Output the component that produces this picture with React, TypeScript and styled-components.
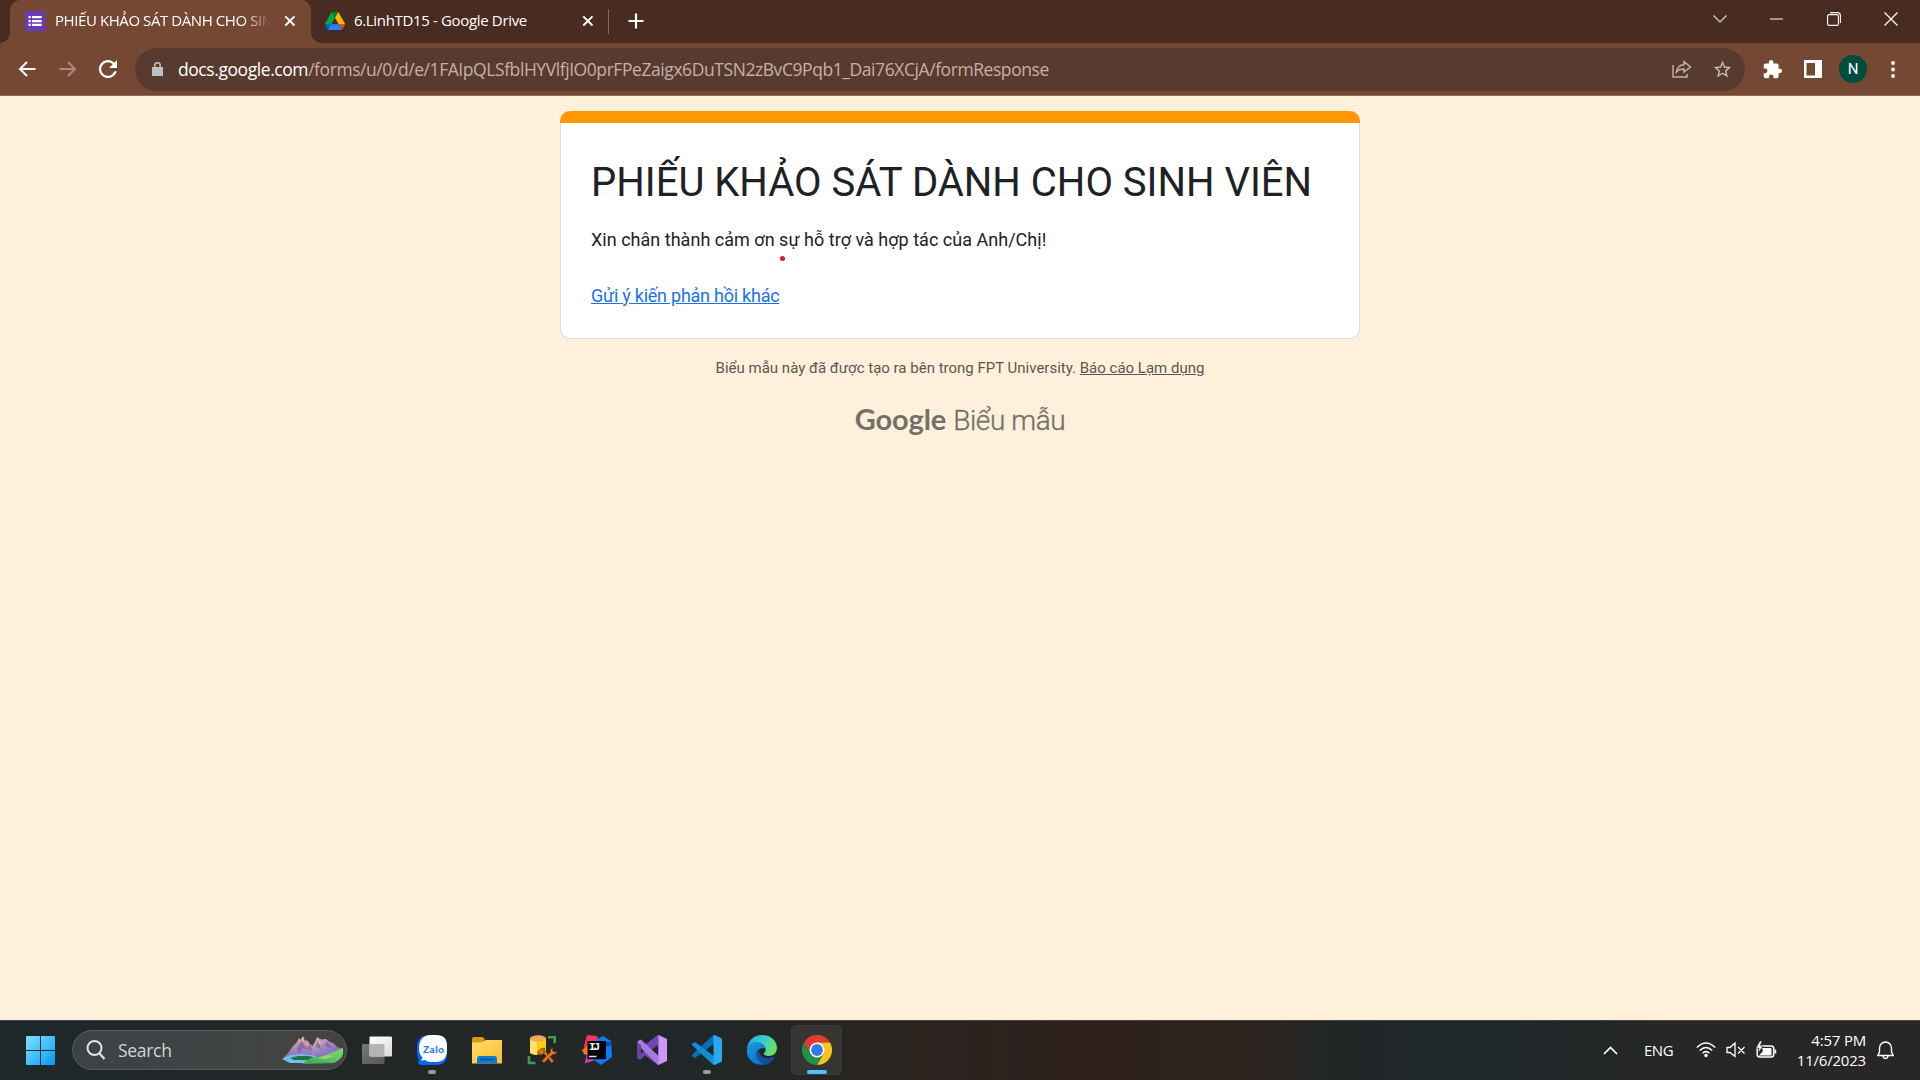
import React from "react";
import styled, { createGlobalStyle } from "styled-components";

const ui = `"Open Sans", "Noto Sans", sans-serif`;

const GlobalStyle = createGlobalStyle`
  * { box-sizing: border-box; }
  body { margin: 0; overflow: hidden; background: #fff0db; }
`;

const Screen = styled.div`
  width: 1920px;
  height: 1080px;
  display: flex;
  flex-direction: column;
  overflow: hidden;
  background: #fff0db;
  font-family: ${ui};
`;

/* ---------- Browser frame ---------- */

const TabStrip = styled.header`
  height: 43px;
  flex: none;
  display: flex;
  align-items: stretch;
  padding-left: 10px;
  background: #492c21;
  color: #fff;
`;

const Tab = styled.div<{ $active?: boolean; $width: number }>`
  position: relative;
  width: ${(p) => p.$width}px;
  height: 43px;
  display: flex;
  align-items: center;
  padding: ${(p) => (p.$active ? "0 15px 2px 15px" : "0 14px 2px 14px")};
  border-radius: 10px 10px 0 0;
  background: ${(p) => (p.$active ? "#744832" : "transparent")};

  &::before,
  &::after {
    content: "";
    display: ${(p) => (p.$active ? "block" : "none")};
    position: absolute;
    bottom: 0;
    width: 10px;
    height: 10px;
  }
  &::before {
    left: -10px;
    background: radial-gradient(circle at 0 0, transparent 9.5px, #744832 10px);
  }
  &::after {
    right: -10px;
    background: radial-gradient(circle at 100% 0, transparent 9.5px, #744832 10px);
  }
`;

const TabTitle = styled.span<{ $fade?: boolean; $tracking: number }>`
  flex: 1;
  margin: -2px 13px 0 ${(p) => (p.$fade ? 10 : 9)}px;
  overflow: hidden;
  white-space: nowrap;
  font-size: 15px;
  line-height: 24px;
  letter-spacing: ${(p) => p.$tracking}px;
  mask-image: ${(p) => (p.$fade ? "linear-gradient(90deg, #000 calc(100% - 28px), transparent)" : "none")};
`;

const TabDivider = styled.i`
  width: 1px;
  height: 25px;
  margin-top: 9px;
  background: #86695c;
`;

const NewTab = styled.div`
  width: 54px;
  display: flex;
  align-items: center;
  justify-content: center;
  padding-bottom: 1px;
`;

const WindowControls = styled.div`
  margin-left: auto;
  margin-right: 1px;
  display: flex;
  height: 37px;
`;

const WindowButton = styled.div`
  width: 57px;
  display: flex;
  align-items: center;
  justify-content: center;
`;

const Toolbar = styled.nav`
  height: 53px;
  flex: none;
  display: flex;
  align-items: center;
  padding: 0 7px 0 7px;
  background: #744832;
  border-bottom: 1px solid #8f6a55;
`;

const ToolButton = styled.div<{ $width?: number }>`
  width: ${(p) => p.$width ?? 40}px;
  height: 40px;
  flex: none;
  display: flex;
  align-items: center;
  justify-content: center;
`;

const Omnibox = styled.div`
  width: 1610px;
  height: 43px;
  flex: none;
  margin-left: 7px;
  display: flex;
  align-items: center;
  padding: 0 3px 0 17px;
  border-radius: 22px;
  background: #593a2f;
`;

const Address = styled.div`
  flex: 1;
  margin-left: 15px;
  white-space: nowrap;
  font-size: 17.5px;
  line-height: 28px;
  letter-spacing: -0.43px;
  color: #c3b1a8;
`;

const Host = styled.span`
  color: #fff;
`;

const Avatar = styled.div`
  width: 28px;
  height: 28px;
  border-radius: 50%;
  background: #004d40;
  color: #fff;
  font: 15px/28px Roboto, sans-serif;
  text-align: center;
`;

/* ---------- Form page ---------- */

const Page = styled.main`
  flex: 1;
  display: flex;
  flex-direction: column;
  align-items: center;
  padding-top: 15px;
  font-family: Roboto, sans-serif;
`;

const Card = styled.section`
  position: relative;
  width: 800px;
  height: 228px;
  display: flex;
  flex-direction: column;
  color: #202124;
`;

const Accent = styled.div`
  height: 12px;
  border-radius: 10px 10px 0 0;
  background: #ff9800;
`;

const CardBody = styled.div`
  flex: 1;
  display: flex;
  flex-direction: column;
  align-items: flex-start;
  padding: 35px 30px 0;
  border: 1px solid #dadce0;
  border-top: 0;
  border-radius: 0 0 10px 10px;
  background: #fff;
`;

const Title = styled.h1`
  margin: 0;
  font-size: 40px;
  line-height: 50px;
  font-weight: 400;
  white-space: nowrap;
`;

const Message = styled.p`
  margin: 19px 0 0;
  font-size: 18px;
  line-height: 26px;
  letter-spacing: 0.02px;
  white-space: nowrap;
`;

const FormLink = styled.a`
  margin-top: 30px;
  font-size: 18px;
  line-height: 26px;
  letter-spacing: -0.24px;
  color: #1a73e8;
  text-decoration: underline;
  white-space: nowrap;
`;

const Pointer = styled.i`
  position: absolute;
  left: 220px;
  top: 145px;
  width: 5px;
  height: 5px;
  border-radius: 50%;
  background: #e81224;
`;

const Notice = styled.p`
  margin: 18px 0 0;
  font-size: 15px;
  line-height: 22px;
  color: #5c574f;
  white-space: nowrap;
`;

const Report = styled.a`
  text-decoration: underline;
`;

const Brand = styled.div`
  display: flex;
  align-items: baseline;
  margin-top: 20px;
  gap: 7px;
  font-size: 28px;
  line-height: 40px;
  color: #757067;
  white-space: nowrap;
`;

const BrandName = styled.span`
  font-family: Lato, sans-serif;
  font-weight: 700;
  font-size: 29px;
  letter-spacing: -0.1px;
`;

const BrandProduct = styled.span`
  font-weight: 300;
  letter-spacing: -0.4px;
  -webkit-text-stroke: 0.35px #757067;
`;

/* ---------- Taskbar ---------- */

const Taskbar = styled.footer`
  height: 60px;
  flex: none;
  display: flex;
  align-items: center;
  padding: 0 26px 1px;
  border-top: 1px solid #454644;
  background: linear-gradient(90deg, #1e282b 0, #232627 300px, #212728 700px, #28251f 860px, #2e201d 1080px, #2d231d 1230px, #272523 1290px, #202626 1340px, #20282a 1500px, #262727 1650px, #282726 1920px);
  color: #fff;
`;

const SearchBox = styled.div`
  width: 275px;
  height: 40px;
  margin-left: 17px;
  margin-right: 2px;
  display: flex;
  align-items: center;
  padding: 0 2px 0 13px;
  border: 1px solid #5a5c5c;
  border-radius: 20px;
  background: linear-gradient(90deg, #3b4346, #444342);
`;

const SearchText = styled.span`
  flex: 1;
  margin-left: 12px;
  font-size: 17.5px;
  letter-spacing: -0.3px;
  color: #d4d6d6;
`;

const AppSlot = styled.div<{ $active?: boolean }>`
  position: relative;
  width: 51px;
  height: 50px;
  margin: 0 2px;
  flex: none;
  display: flex;
  align-items: center;
  justify-content: center;
  border-radius: 5px;
  border: 1px solid ${(p) => (p.$active ? "#3d3b3a" : "transparent")};
  background: ${(p) => (p.$active ? "#363534" : "transparent")};
`;

const Indicator = styled.i<{ $active?: boolean }>`
  position: absolute;
  bottom: 0;
  width: ${(p) => (p.$active ? 20 : 8)}px;
  height: 4px;
  border-radius: 2px;
  background: ${(p) => (p.$active ? "#4cc2ff" : "#9a9b9b")};
`;

const Tray = styled.div`
  margin-left: auto;
  display: flex;
  align-items: center;
`;

const Language = styled.span`
  margin: 0 22px 0 26px;
  width: 30px;
  font-size: 15px;
  letter-spacing: -0.5px;
`;

const StatusIcons = styled.div`
  display: flex;
  align-items: center;
  gap: 10px;
`;

const Clock = styled.div`
  width: 89px;
  margin: -1px 11px 0 0;
  text-align: right;
  font-size: 15px;
  line-height: 20px;
  letter-spacing: -0.2px;
  white-space: nowrap;
`;

/* ---------- Drawings ---------- */

const CloseGlyph = () => (
  <svg width="12" height="12" viewBox="0 0 12 12" stroke="#fff" strokeWidth="1.9">
    <path d="M1.3 1.3l9.2 9.2M10.5 1.3l-9.2 9.2" />
  </svg>
);

const FormsIcon = () => (
  <svg width="20" height="20" viewBox="0 0 20 20">
    <rect width="20" height="20" rx="1.5" fill="#673ab7" />
    <g fill="#fff">
      <path d="M3.500 5h2.300v2.300H3.500zM3.500 8.900h2.300v2.300H3.500zM3.500 12.800h2.300v2.300H3.500zM7 5h9.700v2.300H7zM7 8.900h9.700v2.300H7zM7 12.800h9.700v2.300H7z" />
    </g>
  </svg>
);

const DriveIcon = () => (
  <svg width="20" height="18" viewBox="0 0 87.3 78">
    <path d="m6.6 66.85 3.85 6.65c.8 1.4 1.95 2.5 3.3 3.3l13.75-23.8h-27.5c0 1.55.4 3.1 1.2 4.5z" fill="#0066da" />
    <path d="m43.65 25-13.75-23.8c-1.35.8-2.5 1.9-3.3 3.3l-25.4 44a9.06 9.06 0 0 0 -1.2 4.5h27.5z" fill="#00ac47" />
    <path d="m73.55 76.8c1.35-.8 2.5-1.9 3.3-3.3l1.6-2.75 7.65-13.25c.8-1.4 1.2-2.95 1.2-4.5h-27.5l5.85 11.5z" fill="#ea4335" />
    <path d="m43.65 25 13.75-23.8c-1.35-.8-2.9-1.2-4.5-1.2h-18.5c-1.6 0-3.15.45-4.5 1.2z" fill="#00832d" />
    <path d="m59.8 53h-32.3l-13.75 23.8c1.35.8 2.9 1.2 4.5 1.2h50.8c1.6 0 3.15-.45 4.5-1.2z" fill="#2684fc" />
    <path d="m73.4 26.5-12.7-22c-.8-1.4-1.95-2.5-3.3-3.3l-13.75 23.8 16.15 28h27.45c0-1.55-.4-3.1-1.2-4.5z" fill="#ffba00" />
  </svg>
);

const WindowsIcon = () => (
  <svg width="29" height="29" viewBox="0 0 29 29">
    <defs>
      <linearGradient id="win" x1="0" y1="0" x2="29" y2="29" gradientUnits="userSpaceOnUse">
        <stop stopColor="#84dfff" />
        <stop offset=".5" stopColor="#3fc0fb" />
        <stop offset="1" stopColor="#0a95fa" />
      </linearGradient>
    </defs>
    <path fill="url(#win)" d="M1 0h13v14H0V1a1 1 0 0 1 1-1zM15 0h13a1 1 0 0 1 1 1v13H15zM0 15h14v14H1a1 1 0 0 1-1-1zM15 15h14v13a1 1 0 0 1-1 1H15z" />
  </svg>
);

const MountainArt = () => (
  <svg width="62" height="28" viewBox="0 0 62 28">
    <defs>
      <linearGradient id="mtA" x1="0" y1="0" x2="0" y2="1">
        <stop stopColor="#f5a98e" />
        <stop offset=".4" stopColor="#b08abb" />
        <stop offset="1" stopColor="#6560a4" />
      </linearGradient>
      <linearGradient id="mtB" x1="0" y1="0" x2="1" y2="1">
        <stop stopColor="#e8b0b4" />
        <stop offset=".5" stopColor="#9a80c2" />
        <stop offset="1" stopColor="#6663ad" />
      </linearGradient>
      <linearGradient id="grass" x1="0" y1="1" x2="1" y2="0">
        <stop stopColor="#30a64b" />
        <stop offset="1" stopColor="#85db72" />
      </linearGradient>
    </defs>
    <path d="M1 22L6 17l5-7 4-4 2-4 2 2 2-4 2 5 2-1 3 4 3 2 2-4 2-5 3 2 3 1 3-1 3 3 4 1 4 4 5 3v7l-10 4-28 3z" fill="url(#mtA)" />
    <path d="M31 9l5-7 3 2 4-1 5 3 3 3 4 2 6 2v4l-7 3-14-2-10 2z" fill="url(#mtB)" />
    <path d="M18 7l3-4 1 6 4 5-5-2-4 5-2-4zM36 4l3 9-5-2zM45 6l5 7-7-4zM28 9l2 6-5-3z" fill="#5b5499" opacity=".55" />
    <path d="M19 3l2-2 1 6-2-2zM36 4l4 4-3 0zM24 6l3 3-2 0z" fill="#ffc3a0" opacity=".7" />
    <path d="M0 23l8-4 13-1 14 2-8 7H8z" fill="#6fbdf5" />
    <path d="M8 22l8-2h10l6 1-6 3-14 0z" fill="#23733f" />
    <path d="M20 28l9-6 10-1 12-5 10-4v6q-2 6-9 9z" fill="url(#grass)" />
    <path d="M34 22l11-3 8 1-9 3z" fill="#c5e886" opacity=".55" />
  </svg>
);

const TaskViewIcon = () => (
  <svg width="30" height="30" viewBox="0 0 30 30">
    <defs>
      <linearGradient id="tvA" x1="0" y1="0" x2="1" y2="1"><stop stopColor="#fff" /><stop offset="1" stopColor="#dcdcdc" /></linearGradient>
      <linearGradient id="tvB" x1="0" y1="0" x2="1" y2="1"><stop stopColor="#777" /><stop offset="1" stopColor="#555" /></linearGradient>
    </defs>
    <rect x="0" y="9" width="22.500" height="20" rx="1" fill="url(#tvB)" />
    <rect x="7.500" y="1.500" width="22.500" height="20" rx="1" fill="url(#tvA)" />
    <path d="M7.500 9h15v12.500h-14a1 1 0 0 1-1-1z" fill="#b5b5b5" />
  </svg>
);

const ZaloIcon = () => (
  <svg width="30" height="30" viewBox="0 0 30 30">
    <path d="M12 0h7q11 0 11 11v8q0 11-11 11H4l-3-1.500 1-4q-2-2-2-7v-5Q0 0 12 0z" fill="#0068ff" />
    <path d="M14 0h5q11 0 11 11v4q0 12-11 12h-5q-4 0-6-2l-4 .8 1.500-3.300Q2 19 2 14 2 0 14 0z" fill="#fff" />
    <text x="6" y="17.500" fontFamily="Lato, sans-serif" fontWeight="900" fontSize="10" textLength="21" fill="#2a7bf0">Zalo</text>
  </svg>
);

const FolderIcon = () => (
  <svg width="30" height="30" viewBox="0 0 30 30">
    <defs><linearGradient id="fold" x1="0" y1="0" x2="1" y2="1"><stop stopColor="#ffdc74" /><stop offset="1" stopColor="#fcbd2a" /></linearGradient></defs>
    <path d="M0 4q0-2 2-2h8l3 2-3 5H0z" fill="#dd9a0a" />
    <path d="M0 7.500h9.500l4-2.500H30v23.500H0z" fill="url(#fold)" />
    <path d="M5 28.500v-5q0-2.500 2.500-2.500h15q2.500 0 2.500 2.500v5z" fill="#0f7bd2" />
    <path d="M8.500 24.500h13" stroke="#0a4f95" strokeWidth="1.3" />
  </svg>
);

const DatabaseIcon = () => (
  <svg width="30" height="30" viewBox="0 0 30 30">
    <path d="M3 3.500v14.500q6 3.500 16 0V3.500z" fill="#ffd000" />
    <path d="M3 3.500v14.500q3 2 7 2V6z" fill="#ffe268" />
    <ellipse cx="11" cy="3.500" rx="8" ry="3.200" fill="#eda95a" />
    <path d="M21 2.200h6.700v6M2 21v7h6.500" fill="none" stroke="#3f9e4b" strokeWidth="2.600" />
    <g stroke="#3b2b1b" strokeWidth=".6" fill="#ef7410">
      <path d="M14.500 15.500l2-1.500 10.500 12-2.500 2z" />
      <path d="M14.500 26l9-9-.5-2.500 3-2-.5 3 2 1.500 2.500-1.500-1 3.500-3.500.8-8.500 8z" />
      <path d="M10.500 18q1-4.500 7.500-5l-1.500 2.500 1 2-3 2.500-1.500-1.500-1.500 1z" />
    </g>
  </svg>
);

const IntelliJIcon = () => (
  <svg width="30" height="30" viewBox="0 0 30 30">
    <path d="M5 0l10 1 3 6-4 14-10-2-2-8z" fill="#fe315d" />
    <path d="M0 15l4-3 5 1-2 8-5-2z" fill="#f97a12" />
    <path d="M2.500 28.500L5 18l12 4-6 4z" fill="#c73aa7" />
    <path d="M12 6l9-5 8 5 1 16-11 8-8-6z" fill="#087cfa" />
    <path d="M24 7l5 0-1 4-4 0z" fill="#1c3fa8" />
    <path d="M5.500 6H24v18.200H5.500z" fill="#000" />
    <text x="7" y="14.800" fontFamily="Liberation Mono, monospace" fontWeight="700" fontSize="11" textLength="11" fill="#fff">IJ</text>
    <path d="M7 21.500h7.500" stroke="#ddd" strokeWidth="1.500" />
  </svg>
);

const VisualStudioIcon = () => (
  <svg width="30" height="30" viewBox="0 0 30 30">
    <path d="M0 7l3-2 5 4.500L21 0l1 0v30h-1L8 20.500 3 25l-3-2z" fill="#7047ac" />
    <path d="M4 11v8l4-4zM21 10v10l-7-5z" fill="#242626" />
    <path d="M1 6l3-1.500 18 17V30h-1L0 9z" fill="#a97be0" />
    <path d="M0 7l4 3v10l-4 3z" fill="#6a42a3" />
    <path d="M21.500 0L30 4v22l-8.500 4z" fill="#cd95fa" />
  </svg>
);

const VsCodeIcon = () => (
  <svg width="30" height="30" viewBox="0 0 30 30">
    <path d="M.5 19.500L20.500.8 22.500 0v8.500L3.500 22.500q-1 .6-2 0L.4 21.400q-.8-1 .1-1.900z" fill="#0073b7" />
    <path d="M.5 10.500l20 18.700 2 .8v-8.500L3.500 7.500q-1-.6-2 0L.4 8.600q-.8 1 .1 1.900z" fill="#0f8fd8" />
    <path d="M21.500 29.600V.4q.6-.6 1.500-.2L29 3q1 .5 1 1.600v20.800q0 1.100-1 1.600l-6 2.800q-.9.400-1.500-.2z" fill="#29a9f2" />
  </svg>
);

const EdgeIcon = () => (
  <svg width="30" height="30" viewBox="0 0 30 30">
    <defs>
      <linearGradient id="edgeTop" x1="0" y1="0" x2="30" y2="16" gradientUnits="userSpaceOnUse">
        <stop stopColor="#2aa5dc" /><stop offset=".5" stopColor="#38cdd0" /><stop offset="1" stopColor="#6fe552" />
      </linearGradient>
      <linearGradient id="edgeLow" x1="0" y1="8" x2="18" y2="30" gradientUnits="userSpaceOnUse">
        <stop stopColor="#1b9ae0" /><stop offset="1" stopColor="#0a68c4" />
      </linearGradient>
    </defs>
    <path d="M0 14C1 5 7 0 15 0c9 0 15 6 15 13 0 5-4 8-8 8-4 0-6-1.500-5-3 2-2 2-4 1-6C13 4 3 8 0 14z" fill="url(#edgeTop)" />
    <path d="M0 15C1 9 6 6 11 7.500c4 0 7 3 7.500 6-5-2-9 2-8.500 7 .5 4 4 8 9 8.500C10 32-1 26 0 15z" fill="url(#edgeLow)" />
    <path d="M11.500 13C6 20 12 28 18 29.500c4-.5 8-3.500 9.500-7 .3-.8-.3-1-.9-.7-8 3.700-16-1.300-15.100-8.800z" fill="#114f9e" />
  </svg>
);

const ChromeIcon = () => (
  <svg width="30" height="30" viewBox="0 0 30 30">
    <path d="M2 7.500A15 15 0 0 1 28 7.500H15L8.500 18.700z" fill="#e33b2e" />
    <path d="M28 7.500A15 15 0 0 1 15 30l6.500-11.200L21.500 11.200 15 7.500z" fill="#fcc31e" />
    <path d="M2 7.500A15 15 0 0 0 15 30l6.500-11.200L15 22.500 8.500 18.700z" fill="#219245" />
    <circle cx="15" cy="15" r="7.500" fill="#fff" />
    <circle cx="15" cy="15" r="5.900" fill="#2f7bed" />
  </svg>
);

const apps = [
  { name: "task-view", icon: <TaskViewIcon /> },
  { name: "zalo", icon: <ZaloIcon />, running: true },
  { name: "explorer", icon: <FolderIcon /> },
  { name: "database", icon: <DatabaseIcon /> },
  { name: "intellij", icon: <IntelliJIcon /> },
  { name: "visual-studio", icon: <VisualStudioIcon /> },
  { name: "vscode", icon: <VsCodeIcon />, running: true },
  { name: "edge", icon: <EdgeIcon /> },
  { name: "chrome", icon: <ChromeIcon />, running: true, active: true },
];

export default function App() {
  return (
    <Screen>
      <GlobalStyle />
      <TabStrip>
        <Tab $active $width={301}>
          <FormsIcon />
          <TabTitle $fade $tracking={-0.42}>PHIẾU KHẢO SÁT DÀNH CHO SINH</TabTitle>
          <CloseGlyph />
        </Tab>
        <Tab $width={297}>
          <DriveIcon />
          <TabTitle $tracking={-0.34}>6.LinhTD15 - Google Drive</TabTitle>
          <CloseGlyph />
        </Tab>
        <TabDivider />
        <NewTab>
          <svg width="16" height="16" viewBox="0 0 16 16" stroke="#fff" strokeWidth="2.200"><path d="M8 0.500v15M.5 8h15" /></svg>
        </NewTab>
        <WindowControls>
          <WindowButton>
            <svg width="14" height="8" viewBox="0 0 14 8" fill="none" stroke="#e3dcd9" strokeWidth="1.100"><path d="M.5.5L7 7 13.500.5" /></svg>
          </WindowButton>
          <WindowButton>
            <svg width="13" height="2" viewBox="0 0 13 2"><path d="M0 .5h13v1H0z" fill="#fff" /></svg>
          </WindowButton>
          <WindowButton>
            <svg width="14" height="14" viewBox="0 0 14 14" fill="none" stroke="#fff" strokeWidth="1.100"><rect x=".6" y="2.600" width="10.800" height="10.800" rx="1.500" /><path d="M3 .6h7.400q3 0 3 3V11" /></svg>
          </WindowButton>
          <WindowButton>
            <svg width="14" height="14" viewBox="0 0 14 14" stroke="#fff" strokeWidth="1.200"><path d="M.5.5l13 13M13.500.5l-13 13" /></svg>
          </WindowButton>
        </WindowControls>
      </TabStrip>

      <Toolbar>
        <ToolButton>
          <svg width="18" height="16" viewBox="0 0 18 16" fill="none" stroke="#fff" strokeWidth="2"><path d="M17.500 8H2M9 1L2 8l7 7" /></svg>
        </ToolButton>
        <ToolButton $width={41}>
          <svg width="18" height="16" viewBox="0 0 18 16" fill="none" stroke="#aa8c7e" strokeWidth="2"><path d="M.5 8H16M9 1l7 7-7 7" /></svg>
        </ToolButton>
        <ToolButton>
          <svg width="18" height="18" viewBox="0 0 16 16" fill="#fff"><path d="M13.650 2.350A8 8 0 1 0 15.730 10h-2.080A6 6 0 1 1 8 2c1.660 0 3.140.69 4.220 1.780L9 7h7V0z" /></svg>
        </ToolButton>
        <Omnibox>
          <svg width="11" height="14" viewBox="0 0 11 14"><path d="M0 5h11v9H0z" fill="#bdc1c6" /><path d="M2.800 6V3.500a2.700 2.700 0 0 1 5.400 0V6" fill="none" stroke="#bdc1c6" strokeWidth="1.500" /></svg>
          <Address><Host>docs.google.com</Host>/forms/u/0/d/e/1FAIpQLSfblHYVlfjIO0prFPeZaigx6DuTSN2zBvC9Pqb1_Dai76XCjA/formResponse</Address>
          <ToolButton>
            <svg width="20" height="18" viewBox="0 0 20 18" fill="none" stroke="#bdb0a9" strokeWidth="1.500"><path d="M1 5v12h14v-3M12 1.500L18.500 7 12 12V9Q7 9 4.500 12 5.500 5 12 4.700z" /></svg>
          </ToolButton>
          <ToolButton>
            <svg width="21" height="21" viewBox="0 0 24 24" fill="#c9bfb9"><path d="M22 9.240l-7.190-.62L12 2 9.190 8.630 2 9.240l5.460 4.730L5.820 21 12 17.270 18.180 21l-1.630-7.030L22 9.240zM12 15.400l-3.760 2.270 1-4.280-3.320-2.880 4.380-.38L12 6.100l1.710 4.040 4.380.38-3.320 2.880 1 4.280L12 15.400z" /></svg>
          </ToolButton>
        </Omnibox>
        <ToolButton $width={55}>
          <svg width="21" height="21" viewBox="0 0 24 24" fill="#fff"><path d="M20.500 11H19V7a2 2 0 0 0-2-2h-4V3.500a2.500 2.500 0 0 0-5 0V5H4a2 2 0 0 0-2 2v3.800h1.500a2.700 2.700 0 0 1 0 5.400H2V20a2 2 0 0 0 2 2h3.800v-1.500a2.700 2.700 0 0 1 5.400 0V22H17a2 2 0 0 0 2-2v-4h1.500a2.500 2.500 0 0 0 0-5z" /></svg>
        </ToolButton>
        <ToolButton $width={25}>
          <svg width="18" height="18" viewBox="0 0 18 18"><path fill="#fff" fillRule="evenodd" d="M0 0h18v18H0zM2.500 3v12.500h8.500V3z" /></svg>
        </ToolButton>
        <ToolButton $width={56}><Avatar>N</Avatar></ToolButton>
        <ToolButton $width={23}>
          <svg width="4" height="17" viewBox="0 0 4 17" fill="#fff"><circle cx="2" cy="2" r="1.900" /><circle cx="2" cy="8.500" r="1.900" /><circle cx="2" cy="15" r="1.900" /></svg>
        </ToolButton>
      </Toolbar>

      <Page>
        <Card>
          <Accent />
          <CardBody>
            <Title>PHIẾU KHẢO SÁT DÀNH CHO SINH VIÊN</Title>
            <Message>Xin chân thành cảm ơn sự hỗ trợ và hợp tác của Anh/Chị!</Message>
            <FormLink>Gửi ý kiến phản hồi khác</FormLink>
          </CardBody>
          <Pointer />
        </Card>
        <Notice>Biểu mẫu này đã được tạo ra bên trong FPT University. <Report>Báo cáo Lạm dụng</Report></Notice>
        <Brand><BrandName>Google</BrandName><BrandProduct>Biểu mẫu</BrandProduct></Brand>
      </Page>

      <Taskbar>
        <WindowsIcon />
        <SearchBox>
          <svg width="20" height="20" viewBox="0 0 20 20" fill="none" stroke="#dfe1e1" strokeWidth="2"><circle cx="8.500" cy="8" r="7" /><path d="M13.500 13.500l5 5.500" strokeWidth="2.400" /></svg>
          <SearchText>Search</SearchText>
          <MountainArt />
        </SearchBox>
        {apps.map((app) => (
          <AppSlot key={app.name} $active={app.active}>
            {app.icon}
            {app.running && <Indicator $active={app.active} />}
          </AppSlot>
        ))}
        <Tray>
          <svg width="15" height="9" viewBox="0 0 15 9" fill="none" stroke="#fff" strokeWidth="1.700"><path d="M1 8l6.500-6.500L14 8" /></svg>
          <Language>ENG</Language>
          <StatusIcons>
            <svg width="20" height="16" viewBox="0 0 20 16" fill="none" stroke="#fff" strokeWidth="1.500"><path d="M.8 5.500q9.200-9 18.400 0M3.800 8.500q6.200-6 12.400 0M6.600 11.300q3.400-3.400 6.800 0" /><circle cx="10" cy="13.500" r="1.700" fill="#fff" stroke="none" /></svg>
            <svg width="20" height="16" viewBox="0 0 20 16" fill="none" stroke="#fff" strokeWidth="1.300"><path d="M1 5.500h3L9 1v13.500L4 10.500H1zM12 5l6.500 6.500M18.500 5L12 11.500" /></svg>
            <svg width="21" height="18" viewBox="0 0 21 18"><rect x="1.200" y="5" width="16.500" height="11" rx="2.500" fill="none" stroke="#fff" strokeWidth="1.500" /><path d="M6 7h8.500q1 0 1 1v6.500H3L7 10zM18.500 8.500h1.700v4h-1.700z" fill="#fff" /><path d="M4 0L0 7h3L2 12l5-7H4l2-5z" fill="#fff" stroke="#292827" strokeWidth=".5" /></svg>
          </StatusIcons>
          <Clock>4:57 PM<br />11/6/2023</Clock>
          <svg width="17" height="19" viewBox="0 0 17 19" fill="none" stroke="#fff" strokeWidth="1.400"><path d="M2.500 11V7a6 6 0 0 1 12 0v4l1.700 3.500H.8zM6 15q.3 2.500 2.500 2.500T11 15" /></svg>
        </Tray>
      </Taskbar>
    </Screen>
  );
}
